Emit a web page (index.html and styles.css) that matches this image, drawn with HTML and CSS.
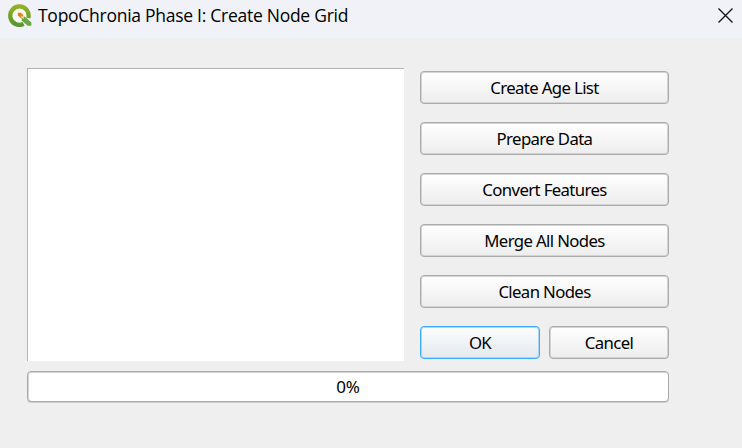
FILE: index.html
```html
<!DOCTYPE html>
<html lang="en">
<head>
<meta charset="utf-8">
<title>TopoChronia Phase I: Create Node Grid</title>
<link rel="stylesheet" href="styles.css">
</head>
<body>
<header class="titlebar">
  <svg class="logo" width="24" height="24" viewBox="0 0 24 24" aria-hidden="true">
    <defs>
      <linearGradient id="ring" x1="0" y1="0" x2="0" y2="1"><stop offset="0" stop-color="#93b023"/><stop offset="1" stop-color="#589632"/></linearGradient>
    </defs>
    <path d="M20.3 15A9.2 9.2 0 1 0 15.6 20.8" fill="#f8faf5" stroke="url(#ring)" stroke-width="4.3"/>
    <path d="M13.6 14.6L16.6 13.4L23.4 19.4V22.8H19.6L13.6 17.4Z" fill="#6aa540"/>
    <path d="M9.8 9.8H12.8L15.2 12V14.8H12.4L9.8 12.6Z" fill="#ee7913"/>
    <path d="M13.4 13.2L15.8 15.5" stroke="#f6d58c" stroke-width="1.6"/>
  </svg>
  <h1 class="title">TopoChronia Phase I: Create Node Grid</h1>
  <svg class="close" width="15" height="15" viewBox="0 0 15 15" aria-label="Close"><path d="M.5 .5L14.5 14.5M14.5 .5L.5 14.5" stroke="#15151b" stroke-width="1.35"/></svg>
</header>
<main class="dialog">
  <div class="workspace">
    <div class="output"></div>
    <div class="actions">
      <button class="button">Create Age List</button>
      <button class="button">Prepare Data</button>
      <button class="button">Convert Features</button>
      <button class="button">Merge All Nodes</button>
      <button class="button">Clean Nodes</button>
      <div class="confirm">
        <button class="button primary">OK</button>
        <button class="button">Cancel</button>
      </div>
    </div>
  </div>
  <div class="progress">0%</div>
</main>
</body>
</html>
```
FILE: styles.css
```css
* { box-sizing: border-box; }
body {
  margin: 0;
  height: 448px;
  overflow: hidden;
  background: #efefef;
  color: #000;
  font-family: "Noto Sans", "Open Sans", sans-serif;
}
.titlebar {
  display: flex;
  height: 38px;
  padding: 3px 9px 0 8px;
  background: #f0f2f8;
}
.logo { flex: none; }
.title {
  margin: 0 0 0 6px;
  flex: 1;
  font: 400 17.5px/24px "Open Sans", sans-serif;
  letter-spacing: -0.27px;
  white-space: nowrap;
}
.close { margin-top: 5px; flex: none; }
.dialog { padding: 30px 73px 0 27px; }
.workspace { display: flex; gap: 16px; height: 293px; }
.output {
  width: 377px;
  background: #fff;
  border-top: 1px solid #b4b4b4;
  border-left: 1px solid #b4b4b4;
}
.actions {
  display: flex;
  flex: 1;
  flex-direction: column;
  gap: 18px;
  padding-top: 3px;
}
.button {
  display: block;
  width: 100%;
  height: 33px;
  padding: 1px 0 0;
  border: 1px solid #ababab;
  border-radius: 4px;
  background: linear-gradient(#fff, #ededed);
  box-shadow: inset 0 0 0 1px #d4d4d4;
  color: #000;
  font: 400 16.75px/30px "Noto Sans", sans-serif;
  letter-spacing: -0.63px;
}
.confirm { display: flex; gap: 9px; }
.primary {
  border-color: #3daaf5;
  background: linear-gradient(#fcfdfe, #e3e9ef);
  box-shadow: inset 0 0 0 1px #a5d7fb;
}
.progress {
  height: 31px;
  margin-top: 10px;
  border: 1px solid #a9a9a9;
  border-radius: 4px;
  background: #fff;
  box-shadow: inset 0 1px 0 #d5d5d5, inset 1px 0 0 #d5d5d5, 0 1px 0 #d0d0d0;
  text-align: center;
  font-size: 17px;
  line-height: 30px;
  letter-spacing: -0.2px;
}
```
